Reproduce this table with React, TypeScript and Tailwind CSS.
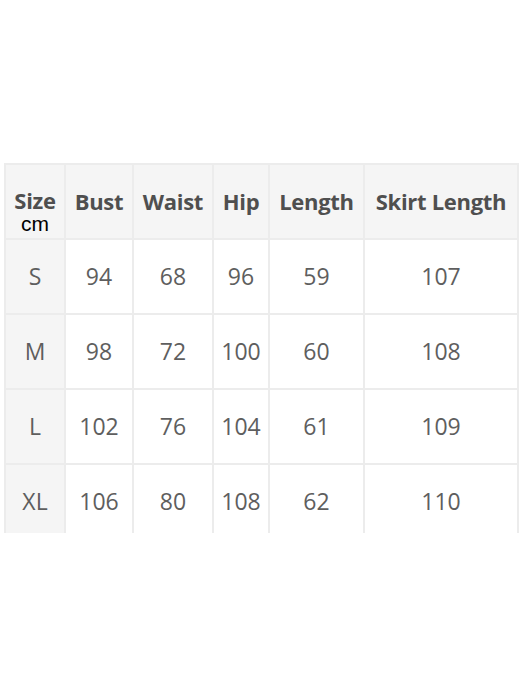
const headers = ['Size', 'Bust', 'Waist', 'Hip', 'Length', 'Skirt Length']

const rows = [
  ['S', '94', '68', '96', '59', '107'],
  ['M', '98', '72', '100', '60', '108'],
  ['L', '102', '76', '104', '61', '109'],
  ['XL', '106', '80', '108', '62', '110'],
]

const widths = ['w-[60px]', 'w-[68px]', 'w-[80px]', 'w-[56px]', 'w-[95px]', 'w-[154px]']

export default function App() {
  return (
    <div className="w-[522px] h-[696px] bg-white pt-[163px] pl-[4px] font-['Open_Sans',sans-serif]">
      <div className="w-[515px] h-[370px] overflow-hidden">
        <table className="table-fixed border-separate border-spacing-0 border-l-2 border-t-2 border-[#ececec] text-[#5e5e5e]">
          <thead>
            <tr className="h-[75px] bg-[#f5f5f5]">
              {headers.map((h, i) => (
                <th
                  key={h}
                  className={`${widths[i]} border-r-2 border-b-2 border-[#ececec] text-[22px] tracking-[-0.3px] font-bold text-[#4f4f4f] text-center align-middle p-0`}
                >
                  {h === 'Size' ? (
                    <div className="flex flex-col items-center pt-[20px]">
                      <span className="leading-[25px]">Size</span>
                      <span className="font-['Liberation_Sans',sans-serif] font-normal tracking-normal text-black text-[21px] leading-[22px]">cm</span>
                    </div>
                  ) : (
                    h
                  )}
                </th>
              ))}
            </tr>
          </thead>
          <tbody>
            {rows.map((r) => (
              <tr key={r[0]} className="h-[75px]">
                {r.map((c, i) => (
                  <td
                    key={i}
                    className={`border-r-2 border-b-2 border-[#ececec] text-[23px] text-center align-middle p-0 ${i === 0 ? 'bg-[#f5f5f5]' : 'bg-white'}`}
                  >
                    {c}
                  </td>
                ))}
              </tr>
            ))}
          </tbody>
        </table>
      </div>
    </div>
  )
}
